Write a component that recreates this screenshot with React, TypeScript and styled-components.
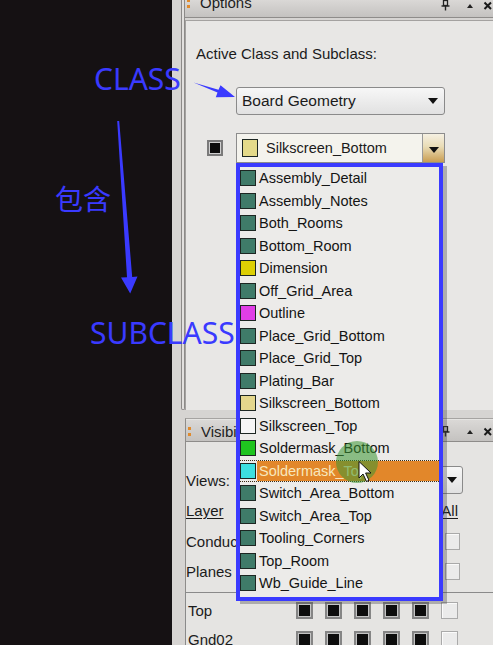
import React from "react";
import styled, { createGlobalStyle } from "styled-components";

const GlobalStyle = createGlobalStyle`
  html, body { margin: 0; padding: 0; background: #151113; overflow: hidden; }
  #root { width: 493px; height: 645px; }
`;

const TEAL = "#3f7b69";
const ANNO = "#3a3aff";

type Sub = { name: string; color: string; active?: boolean };

const subclasses: Sub[] = [
  { name: "Assembly_Detail", color: TEAL },
  { name: "Assembly_Notes", color: TEAL },
  { name: "Both_Rooms", color: TEAL },
  { name: "Bottom_Room", color: TEAL },
  { name: "Dimension", color: "#dccf04" },
  { name: "Off_Grid_Area", color: TEAL },
  { name: "Outline", color: "#e03ee6" },
  { name: "Place_Grid_Bottom", color: TEAL },
  { name: "Place_Grid_Top", color: TEAL },
  { name: "Plating_Bar", color: TEAL },
  { name: "Silkscreen_Bottom", color: "#e4d78c" },
  { name: "Silkscreen_Top", color: "#f6f6f6" },
  { name: "Soldermask_Bottom", color: "#1fc41f" },
  { name: "Soldermask_Top", color: "#3de0e0", active: true },
  { name: "Switch_Area_Bottom", color: TEAL },
  { name: "Switch_Area_Top", color: TEAL },
  { name: "Tooling_Corners", color: TEAL },
  { name: "Top_Room", color: TEAL },
  { name: "Wb_Guide_Line", color: TEAL },
];

const Frame = styled.div`
  position: relative;
  width: 493px;
  height: 645px;
  display: flex;
  overflow: hidden;
  font-family: "Liberation Sans", Arial, sans-serif;
  color: #1b1b1b;
`;

const DarkSide = styled.div`
  width: 172px;
  flex-shrink: 0;
  background: #151113;
`;

const Workspace = styled.div`
  flex: 1;
  display: flex;
  background: #d6d4d2;
  min-width: 0;
`;

const Rail = styled.div`
  width: 13px;
  flex-shrink: 0;
  display: flex;
  justify-content: flex-end;
`;

const Track = styled.div`
  width: 4px;
  height: 410px;
  box-sizing: border-box;
  border: 1px solid #8c8a88;
  border-top: none;
  border-radius: 0 0 3px 3px;
  background: #e2e0de;
`;

const Panels = styled.div`
  flex: 1;
  display: flex;
  flex-direction: column;
  min-width: 0;
`;

const OptionsPanel = styled.section`
  height: 410px;
  display: flex;
  flex-direction: column;
  flex-shrink: 0;
`;

const PanelHeader = styled.header<{ $h: number }>`
  height: ${(p) => p.$h}px;
  flex-shrink: 0;
  display: flex;
  align-items: flex-start;
  overflow: hidden;
  background: linear-gradient(#dad8d6, #c4c2c0);
  border-bottom: 1px solid #8e8c8a;
  padding-left: 2px;
`;

const Grip = styled.div<{ $top: number }>`
  margin-top: ${(p) => p.$top}px;
  width: 3px;
  height: 9px;
  display: flex;
  flex-direction: column;
  justify-content: space-between;
  &::before,
  &::after {
    content: "";
    height: 3px;
    background: #e08a2c;
  }
`;

const Title = styled.span<{ $top: number }>`
  margin-top: ${(p) => p.$top}px;
  margin-left: 10px;
  font-size: 15px;
  line-height: 17px;
  color: #1e1e1e;
`;

const HeaderIcons = styled.svg<{ $top: number }>`
  margin-left: auto;
  margin-top: ${(p) => p.$top}px;
  flex-shrink: 0;
`;

const OptionsBody = styled.div`
  flex: 1;
  margin-top: 2px;
  border-left: 1px solid #a4a2a0;
  border-top: 1px solid #a4a2a0;
  background: #e8e7e5;
  padding: 24px 0 0 10px;
  display: flex;
  flex-direction: column;
`;

const Label = styled.div`
  font-size: 15px;
  line-height: 17px;
`;

const ClassCombo = styled.div`
  margin-top: 25px;
  margin-left: 40px;
  width: 209px;
  height: 28px;
  box-sizing: border-box;
  border: 1px solid #8a8a8a;
  border-radius: 3px;
  background: linear-gradient(#f7f7f7, #e1e1e1);
  display: flex;
  align-items: center;
  padding: 0 6px 0 5px;
  font-size: 15.5px;
`;

const Arrow = styled.span`
  margin-left: auto;
  width: 0;
  height: 0;
  border-left: 5px solid transparent;
  border-right: 5px solid transparent;
  border-top: 6px solid #111;
`;

const SubRow = styled.div`
  margin-top: 18px;
  height: 30px;
  display: flex;
  align-items: center;
`;

const ColorChip = styled.span`
  margin-left: 11px;
  width: 16px;
  height: 16px;
  box-sizing: border-box;
  border: 2px solid #7a7a7a;
  background: #0c0c0c;
  box-shadow: inset 0 0 0 1px #cfcfcf;
`;

const SubCombo = styled.div`
  margin-left: 13px;
  width: 209px;
  height: 30px;
  box-sizing: border-box;
  border: 1px solid #8c8c8c;
  background: #f4f3ed;
  display: flex;
  align-items: center;
`;

const Swatch = styled.span<{ $color: string; $w?: number; $h?: number }>`
  flex-shrink: 0;
  width: ${(p) => p.$w ?? 16}px;
  height: ${(p) => p.$h ?? 16}px;
  box-sizing: border-box;
  border: 1.5px solid #1c2622;
  background: ${(p) => p.$color};
`;

const ComboSwatch = styled(Swatch)`
  margin-left: 5px;
`;

const ItemText = styled.span`
  font-size: 14.5px;
  letter-spacing: 0;
  white-space: nowrap;
`;

const SubText = styled(ItemText)`
  margin-left: 8px;
`;

const DropButton = styled.span`
  margin-left: auto;
  align-self: stretch;
  width: 21px;
  border-left: 1px solid #9a9a9a;
  background: linear-gradient(#f5f0e2 0%, #e9dcb6 45%, #c99d52 100%);
  display: flex;
  align-items: center;
  justify-content: center;
  & > span {
    margin: 4px 0 0 0;
  }
`;

const VisibilityPanel = styled.section`
  flex: 1;
  margin-top: 8px;
  border-top: 1px solid #a6a4a2;
  border-left: 1px solid #8e8c8a;
  padding-top: 1px;
  background: #e5e4e2;
  display: flex;
  flex-direction: column;
`;

const VisBody = styled.div`
  padding: 23px 30px 0 0;
  display: flex;
  flex-direction: column;
`;

const VisRow = styled.div`
  height: 30.5px;
  display: flex;
  align-items: center;
  font-size: 15px;
  line-height: 17px;
`;

const Underlined = styled.span<{ $right?: number }>`
  text-decoration: underline;
  text-underline-offset: 2px;
  margin-right: ${(p) => p.$right ?? 0}px;
`;

const PushRight = styled.span`
  margin-left: auto;
`;

const ViewsCombo = styled.div`
  margin-left: auto;
  width: 210px;
  height: 28px;
  box-sizing: border-box;
  border: 1px solid #8a8a8a;
  border-radius: 3px;
  background: linear-gradient(#f7f7f7, #e1e1e1);
  display: flex;
  align-items: center;
  padding-right: 5px;
`;

const LightBox = styled.span<{ $right?: number }>`
  margin-left: auto;
  margin-right: ${(p) => p.$right ?? 0}px;
  width: 15px;
  height: 17px;
  box-sizing: border-box;
  border: 1px solid #a9a9a9;
  background: #ebebeb;
  box-shadow: inset 1px 1px 0 #fafafa;
`;

const LayerGrid = styled.div`
  margin-top: 5px;
  margin-left: -1px;
  border-top: 1px solid #8a8a8a;
  border-left: 1px solid #8a8a8a;
  padding: 3px 0 0 2px;
  display: grid;
  grid-template-columns: 108px repeat(6, 29px);
  grid-auto-rows: 29px;
  align-items: center;
  font-size: 15px;
`;

const DarkBox = styled.span`
  width: 17px;
  height: 17px;
  box-sizing: border-box;
  border: 2px solid #858585;
  background: #0d0d0d;
  box-shadow: inset 0 0 0 1px #c4c4c4;
`;

const GridLight = styled.span`
  width: 17px;
  height: 17px;
  box-sizing: border-box;
  border: 1px solid #aaaaaa;
  background: #ebebeb;
  box-shadow: inset 1px 1px 0 #fbfbfb;
`;

/* popup list (overlay) */
const Popup = styled.ul`
  position: absolute;
  left: 236px;
  top: 163px;
  width: 207px;
  height: 438px;
  margin: 0;
  padding: 0;
  list-style: none;
  box-sizing: border-box;
  border: 4px solid ${ANNO};
  background: #ecebe9;
  box-shadow: 4px 3px 0 rgba(70, 70, 70, 0.35);
  z-index: 2;
  overflow: hidden;
`;

const Item = styled.li<{ $active?: boolean }>`
  height: 22.5px;
  box-sizing: border-box;
  display: flex;
  align-items: center;
  border-top: 1px dotted ${(p) => (p.$active ? "#3a2a12" : "transparent")};
  border-bottom: 1px dotted ${(p) => (p.$active ? "#3a2a12" : "transparent")};
`;

const ItemLabel = styled.span<{ $active?: boolean }>`
  flex: 1;
  align-self: stretch;
  display: flex;
  align-items: center;
  margin-left: 1px;
  padding-left: 2px;
  background: ${(p) => (p.$active ? "#e2872a" : "transparent")};
  color: ${(p) => (p.$active ? "#f7e7bd" : "#141414")};
`;

/* annotations over everything */
const AnnoLayer = styled.svg`
  position: absolute;
  left: 0;
  top: 0;
  z-index: 3;
  pointer-events: none;
`;

const Note = styled.span`
  position: absolute;
  z-index: 3;
  color: ${ANNO};
  font-family: "Noto Sans", "Noto Sans CJK SC", sans-serif;
  font-size: 30px;
  line-height: 30px;
  white-space: nowrap;
`;

const ClassNote = styled(Note)`
  left: 94px;
  top: 64px;
`;

const SubclassNote = styled(Note)`
  left: 90px;
  top: 318px;
`;

const ContainsNote = styled(Note)`
  font-family: "Noto Sans CJK SC", sans-serif;
  font-size: 28px;
  line-height: 28px;
  left: 55px;
  top: 184px;
`;

const PanelIcons: React.FC<{ top: number }> = ({ top }) => (
  <HeaderIcons $top={top} width="52" height="12" viewBox="0 0 52 12">
    <rect x="2.5" y="0.5" width="4" height="5" fill="none" stroke="#222" strokeWidth="1.3" />
    <line x1="0.5" y1="6" x2="8.5" y2="6" stroke="#222" strokeWidth="1.4" />
    <line x1="4.5" y1="6" x2="4.5" y2="10.5" stroke="#222" strokeWidth="1.4" />
    <polygon points="26,8 32,8 29,4" fill="#222" />
    <path d="M43.5 2.5 L50 9 M50 2.5 L43.5 9" stroke="#1a1a1a" strokeWidth="2" />
  </HeaderIcons>
);

export default function App() {
  return (
    <>
      <GlobalStyle />
      <Frame>
        <DarkSide />
        <Workspace>
          <Rail>
            <Track />
          </Rail>
          <Panels>
            <OptionsPanel>
              <PanelHeader $h={17}>
                <Grip $top={-1} />
                <Title $top={-6}>Options</Title>
                <PanelIcons top={0} />
              </PanelHeader>
              <OptionsBody>
                <Label>Active Class and Subclass:</Label>
                <ClassCombo>
                  Board Geometry
                  <Arrow />
                </ClassCombo>
                <SubRow>
                  <ColorChip />
                  <SubCombo>
                    <ComboSwatch $color="#e4da8a" $w={16} $h={18} />
                    <SubText>Silkscreen_Bottom</SubText>
                    <DropButton>
                      <Arrow />
                    </DropButton>
                  </SubCombo>
                </SubRow>
              </OptionsBody>
            </OptionsPanel>
            <VisibilityPanel>
              <PanelHeader $h={21}>
                <Grip $top={7} />
                <Title $top={3}>Visibility</Title>
                <PanelIcons top={6} />
              </PanelHeader>
              <VisBody>
                <VisRow>
                  Views:
                  <ViewsCombo>
                    <Arrow />
                  </ViewsCombo>
                </VisRow>
                <VisRow>
                  <Underlined>Layer</Underlined>
                  <PushRight />
                  <Underlined $right={5}>All</Underlined>
                </VisRow>
                <VisRow>
                  Conductors
                  <LightBox $right={3} />
                </VisRow>
                <VisRow>
                  Planes
                  <LightBox $right={3} />
                </VisRow>
              </VisBody>
              <LayerGrid>
                <span>Top</span>
                <DarkBox />
                <DarkBox />
                <DarkBox />
                <DarkBox />
                <DarkBox />
                <GridLight />
                <span>Gnd02</span>
                <DarkBox />
                <DarkBox />
                <DarkBox />
                <DarkBox />
                <DarkBox />
                <GridLight />
              </LayerGrid>
            </VisibilityPanel>
          </Panels>
        </Workspace>

        <Popup>
          {subclasses.map((s) => (
            <Item key={s.name} $active={s.active}>
              <Swatch $color={s.color} />
              <ItemLabel $active={s.active}>
                <ItemText>{s.name}</ItemText>
              </ItemLabel>
            </Item>
          ))}
        </Popup>

        <ClassNote>CLASS</ClassNote>
        <ContainsNote>包含</ContainsNote>
        <SubclassNote>SUBCLASS</SubclassNote>

        <AnnoLayer width="493" height="645" viewBox="0 0 493 645">
          <polygon
            points="193.5,82.5 218.5,89.8 220.5,85.2 235,97 215.8,97.2 217.5,92.6"
            fill={ANNO}
          />
          <polygon
            points="117.2,121 119.2,121 132.2,277 137.5,276.5 130.2,293.5 121,277.5 127,277.2"
            fill={ANNO}
          />
          <circle cx="357" cy="462" r="21" fill="rgba(58,150,50,0.55)" />
          <path
            d="M359 461.5 L359 478 L363 474 L366.5 481.5 L369 480.3 L365.6 473 L371 473 Z"
            fill="#ffffff"
            stroke="#111"
            strokeWidth="1"
            strokeLinejoin="round"
          />
        </AnnoLayer>
      </Frame>
    </>
  );
}
